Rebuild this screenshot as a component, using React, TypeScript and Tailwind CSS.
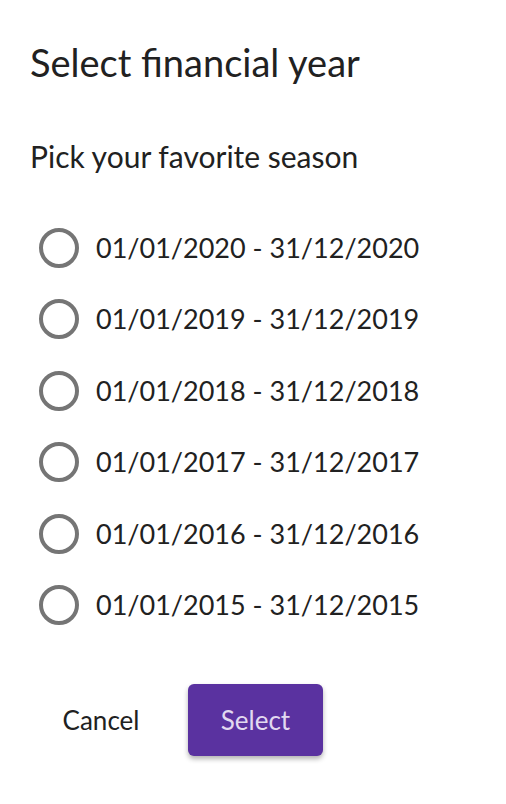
import React from "react";

const years = [2020, 2019, 2018, 2017, 2016, 2015];

export default function App() {
  return (
    <div className="w-[506px] h-[804px] bg-white text-[#212121]" style={{ fontFamily: "Lato, 'Noto Sans', sans-serif" }}>
      <div className="pl-[30px] pt-[40px]">
        <h1 className="text-[38px] leading-[44px] font-normal">Select financial year</h1>
        <p className="mt-[54px] text-[30px] leading-[36px]">Pick your favorite season</p>
        <div className="mt-[38px] flex flex-col">
          {years.map((y) => (
            <label key={y} className="flex items-center h-[71.5px]">
              <span className="ml-[9px] w-[40px] h-[40px] rounded-full border-[4px] border-[#757575] box-border" />
              <span className="ml-[17px] text-[27px] leading-[36px]">{`01/01/${y} - 31/12/${y}`}</span>
            </label>
          ))}
        </div>
        <div className="mt-[43px] flex items-center">
          <button className="ml-[16px] w-[110px] h-[72px] text-[26px] text-[#212121] text-center">Cancel</button>
          <button className="ml-[32px] w-[135px] h-[72px] rounded-[6px] bg-[#5a32a0] text-[#e2d9f0] text-[26px] shadow-[0_3px_5px_rgba(0,0,0,0.3)]">Select</button>
        </div>
      </div>
    </div>
  );
}
